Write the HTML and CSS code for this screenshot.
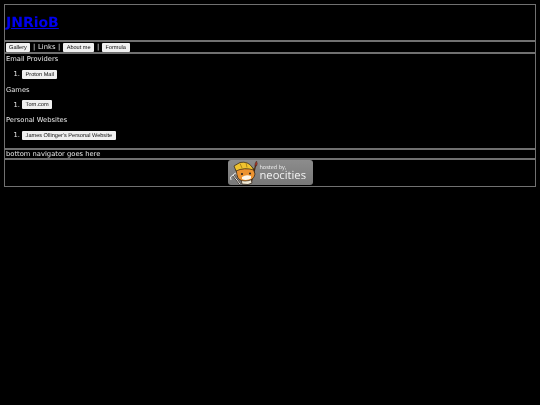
FILE: index.html
```html
<!DOCTYPE html>
<html lang="en">
<head>
    <meta charset="UTF-8">
    <title>JNRioB</title>
    <link rel="stylesheet" href="styles.css">
</head>
<body>
    <main class="container">
        <header class="box header">
            <h1><a href="#">JNRioB</a></h1>
        </header>
        <nav class="box nav">
            <button>Gallery</button>
            <span class="sep">|</span>
            <span>Links</span>
            <span class="sep">|</span>
            <button>About me</button>
            <span class="sep">|</span>
            <button>Formula</button>
        </nav>
        <section class="box links">
            <h2>Email Providers</h2>
            <ol>
                <li><button>Proton Mail</button></li>
            </ol>
            <h2>Games</h2>
            <ol>
                <li><button>Torn.com</button></li>
            </ol>
            <h2>Personal Websites</h2>
            <ol>
                <li><button>James Ollinger's Personal Website</button></li>
            </ol>
        </section>
        <div class="box bottom">bottom navigator goes here</div>
        <footer class="box footer">
            <div class="badge">
                <svg class="cat" width="32" height="25" viewBox="0 0 32 25">
                    <!-- brush -->
                    <path d="M28 4 L23 23" stroke="#4a2a14" stroke-width="1.3"/>
                    <path d="M28.5 1 Q30 3.5 28.5 6 L26.8 5.5 Q26.8 3 28.5 1 Z" fill="#a9382c" stroke="#2c2014" stroke-width=".4"/>
                    <!-- body -->
                    <path d="M13 19 L23 19 L24 23 L20 24.5 L14 24 Z" fill="#f2ead6" stroke="#2c2014" stroke-width=".7"/>
                    <!-- fork -->
                    <path d="M5 15 L12 24" stroke="#2c2014" stroke-width="1.8" fill="none"/>
                    <path d="M5 15 L12 24 M2.5 17 L5 15 L7.5 13 M2.5 17 L3 20 M7.5 13 L9.5 15" stroke="#ececec" stroke-width="1" fill="none"/>
                    <!-- head -->
                    <path d="M8 9 L25 8 L27 14 Q26 21 17 21 Q10 21 9 15 Z" fill="#ec9330" stroke="#2c2014" stroke-width=".7"/>
                    <path d="M14 17 Q18 14 23 16 L23 18.5 Q18 21 14 19 Z" fill="#fbf6ea"/>
                    <circle cx="14" cy="14" r="1" fill="#1c1c1c"/>
                    <circle cx="22" cy="13.5" r="1" fill="#1c1c1c"/>
                    <!-- helmet -->
                    <path d="M6 6 L12 2.5 Q20 1 24 7 L26 10 Q16 7 8 11 Z" fill="#f0c32f" stroke="#2c2014" stroke-width=".7"/>
                    <path d="M12 3.5 L14 8 M18 2.5 L19 7.5" stroke="#9c7412" stroke-width=".8"/>
                </svg>
                <div class="badge-text">
                    <span class="hosted">hosted by,</span>
                    <span class="neo">neocities</span>
                </div>
            </div>
        </footer>
    </main>
</body>
</html>
```

FILE: styles.css
```css
html, body {
    margin: 0;
    background: black;
}

body {
    padding: 4px;
    color: #e8e8e8;
    font-family: "DejaVu Sans", sans-serif;
    font-size: 6.75px;
    text-rendering: geometricPrecision;
}

.container {
    display: flex;
    flex-direction: column;
    width: 532px;
    filter: blur(.35px);
}

.box {
    border: 1px solid #707070;
    padding: 0 1px;
    box-sizing: border-box;
}

.header {
    height: 37px;
    display: flex;
    align-items: center;
}

h1 {
    margin: 0;
    font-size: 14px;
    font-weight: bold;
}

h1 a {
    color: #0000ee;
}

.nav {
    height: 12px;
    padding-left: .5px;
    padding-top: .5px;
    display: flex;
    align-items: center;
    gap: 2.7px;
}

button {
    background: #f0f0f0;
    color: #111;
    border: 0;
    border-radius: 1px;
    font-family: "Liberation Sans", sans-serif;
    font-size: 5.6px;
    text-rendering: geometricPrecision;
    height: 9px;
    padding: 1px 3.6px 0;
    vertical-align: middle;
}

h2 {
    margin: 0;
    font-size: 6.75px;
    font-weight: normal;
    line-height: 9px;
}

ol {
    margin: 5px 0 6.7px;
    padding-left: 16px;
}

li {
    line-height: 10px;
}

.links {
    height: 96px;
    padding-top: 1px;
}

.bottom {
    height: 10px;
    line-height: 9px;
}

.footer {
    height: 28px;
    display: flex;
    justify-content: center;
    align-items: flex-start;
}

.badge {
    width: 85px;
    height: 25px;
    background: linear-gradient(#8c8c8c, #787878);
    border-radius: 3px;
    display: flex;
    color: #f2f2f2;
}

.badge-text {
    display: flex;
    flex-direction: column;
    font-family: "Open Sans", sans-serif;
    padding-top: 4px;
}

.hosted {
    font-size: 5.5px;
    line-height: 6px;
}

.neo {
    font-size: 11.2px;
    line-height: 12px;
}
```
